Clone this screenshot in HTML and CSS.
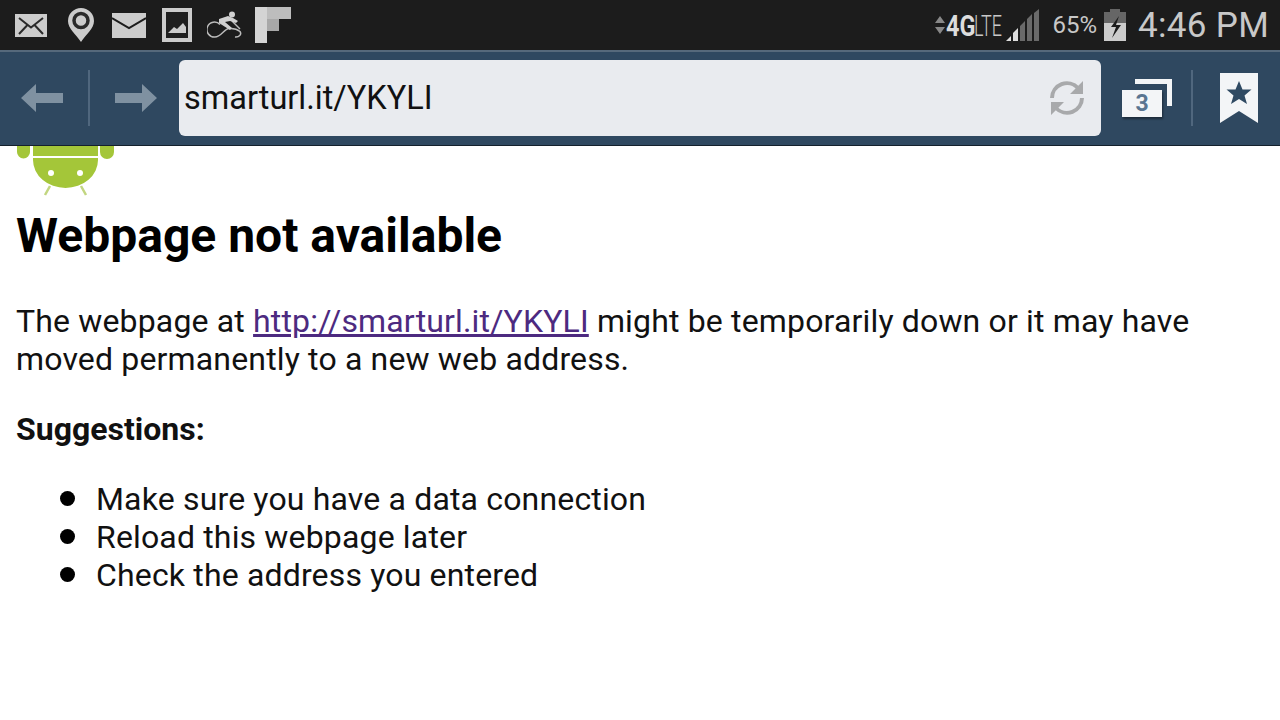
FILE: index.html
```html
<!DOCTYPE html>
<html lang="en">

<head>
    <meta charset="UTF-8" />
    <title>Webpage not available</title>
    <link rel="stylesheet" href="styles.css">
</head>

<body>
    <div class="statusbar">
        <div class="notif">
            <svg class="ic ic-env" viewBox="0 0 32 24"><rect x="0" y="1" width="32" height="23" fill="#ccc"/><path d="M4 5l12 9.500L28 5M4 21l8-8.500M28 21l-8-8.500" fill="none" stroke="#2a2a2a" stroke-width="2"/></svg>
            <svg class="ic ic-pin" viewBox="0 0 26 34"><path d="M13 0a13 13 0 0 1 13 13c0 8-8 13-13 21C8 26 0 21 0 13A13 13 0 0 1 13 0z" fill="#ccc"/><circle cx="13" cy="12.500" r="7" fill="none" stroke="#2a2a2a" stroke-width="3.500"/></svg>
            <svg class="ic ic-mail" viewBox="0 0 34 25"><path d="M0 0h34v25H0z" fill="#ccc"/><path d="M0 5l17 10L34 5" fill="none" stroke="#1c1c1c" stroke-width="2"/></svg>
            <svg class="ic ic-pic" viewBox="0 0 30 34"><path d="M0 0h30v34H0z" fill="#ccc"/><path d="M4 4h22v26H4z" fill="#1f1f1f"/><path d="M6 25l6-6 3 2 6-6 3 4v6z" fill="#ccc"/></svg>
            <svg class="ic ic-bike" viewBox="0 0 36 28"><g fill="none" stroke="#bbb" stroke-width="1.500"><path d="M13 13.500A7.500 7.500 0 1 0 8 26c6 0 9-8 14-8.500 5-.5 8 .5 11 3 2 3-1 6-5 5.500"/><path d="M25 10l8 8"/></g><circle cx="25" cy="3.500" r="3" fill="#d0d0d0"/><path d="M12 8l9-3 5 2 5 3-2 2-6-2-5 1 7 6-2 2-11-7z" fill="#d0d0d0"/></svg>
            <svg class="ic ic-flip" viewBox="0 0 36 36"><path d="M0 0h12v36H0z" fill="#d4d4d4"/><path d="M12 0h24v12H12z" fill="#bdbdbd"/><path d="M12 12h12v12H12z" fill="#a8a8a8"/></svg>
        </div>
        <div class="sysinfo">
            <svg class="ic ic-updown" viewBox="0 0 12 20"><path d="M6 1l5 7H1zM6 19l-5-7h10z" fill="#888"/></svg>
            <span class="net"><b>4G</b><span class="lte">LTE</span></span>
            <svg class="ic ic-signal" viewBox="0 0 34 32"><path d="M0 32l5-5v5z" fill="#ddd"/><path d="M7 32V24l5-5v13z" fill="#ddd"/><path d="M14 32V17l5-5v20zM21 32V10l5-5v27zM28 32V4l5-4v32z" fill="#6a6a6a"/></svg>
            <span class="batt">65%</span>
            <svg class="ic ic-batt" viewBox="0 0 22 32"><path d="M6 0h10v3h6v29H0V3h6z" fill="#666"/><path d="M0 14h22v18H0z" fill="#ccc"/><path d="M15 7L7 18h5L8 29l9-13h-5z" fill="#1c1c1c"/></svg>
            <span class="clock">4:46 PM</span>
        </div>
    </div>

    <div class="toolbar">
        <svg class="arrow" viewBox="0 0 42 28"><path d="M0 14L15 0v9h27v10H15v9z" fill="#7f91a1"/></svg>
        <div class="sep"></div>
        <svg class="arrow" viewBox="0 0 42 28"><path d="M42 14L27 0v9H0v10h27v9z" fill="#7f91a1"/></svg>
        <div class="urlbox">
            <span class="urltext">smarturl.it/YKYLI</span>
            <svg class="reload" viewBox="0 0 36 36"><g fill="none" stroke="#a8a9ab" stroke-width="4"><path d="M3 18A15 15 0 0 1 29 8"/><path d="M33 18A15 15 0 0 1 7 28"/></g><path d="M34 1v13H21zM2 35V22h13z" fill="#a8a9ab"/></svg>
        </div>
        <div class="tabs">
            <div class="tabback"></div>
            <div class="tabfront">3</div>
        </div>
        <div class="sep sep2"></div>
        <svg class="bookmark" viewBox="0 0 38 50"><path d="M0 0h38v50L19 38 0 50z" fill="#f3f5f7"/><path d="M19 8l3.500 8.500h9l-7 6 2.500 8.500-8-5-8 5 2.500-8.500-7-6h9z" fill="#2f4a63"/></svg>
    </div>

    <div class="page">
        <svg class="droid" viewBox="0 0 99 50"><path d="M1 0h13v6a6.500 6.500 0 0 1-13 0zM84 0h14v6a7 7 0 0 1-14 0z" fill="#a4c639"/><path d="M17 0h65v10H17zM17 12h65v2a32.500 28 0 0 1-65 0z" fill="#a4c639"/><circle cx="35" cy="27" r="3" fill="#fff"/><circle cx="64" cy="27" r="3" fill="#fff"/><path d="M34 40l-5 9M65 40l5 9" stroke="#c2d680" stroke-width="2.500"/></svg>
        <h1>Webpage not available</h1>
        <p>The webpage at <a href="#">http://smarturl.it/YKYLI</a> might be temporarily down or it may have moved permanently to a new web address.</p>
        <p class="sugg">Suggestions:</p>
        <ul>
            <li>Make sure you have a data connection</li>
            <li>Reload this webpage later</li>
            <li>Check the address you entered</li>
        </ul>
    </div>
</body>

</html>
```

FILE: styles.css
```css
html, body {
    margin: 0;
    padding: 0;
    background: #fff;
    font-family: Roboto, "Liberation Sans", sans-serif;
}

body {
    width: 1280px;
    height: 720px;
    overflow: hidden;
}

/* Status bar */
.statusbar {
    height: 50px;
    background: #1c1c1c;
    display: flex;
    justify-content: space-between;
    align-items: center;
    padding: 0 11px 0 15px;
    box-sizing: border-box;
}

.notif, .sysinfo {
    display: flex;
    align-items: center;
}

.ic {
    display: block;
    flex: none;
}

.ic-env { width: 32px; height: 24px; }
.ic-pin { width: 26px; height: 34px; margin-left: 21px; }
.ic-mail { width: 34px; height: 25px; margin-left: 18px; }
.ic-pic { width: 30px; height: 34px; margin-left: 16px; }
.ic-bike { width: 36px; height: 28px; margin-left: 15px; }
.ic-flip { width: 36px; height: 36px; margin-left: 12px; }

.sysinfo {
    color: #c8c8c8;
}

.ic-updown { width: 12px; height: 20px; }
.ic-signal { width: 34px; height: 32px; margin: 0 13px 0 5px; }
.ic-batt { width: 22px; height: 32px; }

.net {
    display: flex;
    width: 55px;
    font-size: 30px;
    white-space: nowrap;
}

.net b {
    display: block;
    width: 28px;
    color: #ddd;
    transform: scaleX(0.78);
    transform-origin: left center;
}

.lte {
    display: block;
    width: 27px;
    font-weight: 300;
    transform: scaleX(0.6);
    transform-origin: left center;
}

.batt {
    font-size: 24px;
    margin-right: 7px;
}

.clock {
    font-size: 35px;
    margin-left: 12px;
    letter-spacing: 0.3px;
}

/* Toolbar */
.toolbar {
    height: 96px;
    box-sizing: border-box;
    background: #2f4860;
    border-top: 2px solid #56697b;
    border-bottom: 1px solid #14202c;
    display: flex;
    align-items: center;
    padding: 0 21px 2px;
}

.arrow {
    width: 42px;
    height: 28px;
    flex: none;
}

.sep {
    width: 2px;
    height: 56px;
    background: #50677e;
    margin: 0 25px;
    flex: none;
}

.urlbox {
    width: 922px;
    height: 76px;
    margin-left: 22px;
    background: #e9ebef;
    border-radius: 6px;
    display: flex;
    align-items: center;
    justify-content: space-between;
    padding: 0 16px 0 5px;
    box-sizing: border-box;
    flex: none;
}

.urltext {
    font-size: 32.500px;
    color: #111;
}

.reload {
    width: 36px;
    height: 36px;
}

.tabs {
    position: relative;
    width: 50px;
    height: 38px;
    margin-left: 21px;
    flex: none;
}

.tabback {
    position: absolute;
    top: 0;
    right: 0;
    width: 32px;
    height: 22px;
    border-top: 5px solid #f3f5f7;
    border-right: 5px solid #f3f5f7;
}

.tabfront {
    position: absolute;
    left: 0;
    bottom: 0;
    width: 40px;
    height: 27px;
    background: #f3f5f7;
    color: #5a7591;
    font-size: 23px;
    font-weight: 700;
    text-align: center;
    line-height: 27px;
    box-shadow: 1px 2px 2px rgba(0, 0, 0, 0.4);
}

.sep2 {
    margin: 0 27px 0 19px;
}

.bookmark {
    width: 38px;
    height: 50px;
    flex: none;
}

/* Page */
.page {
    padding: 0 16px;
    color: #111;
}

.droid {
    display: block;
    width: 99px;
    height: 50px;
}

h1 {
    margin: 11px 0 0;
    font-size: 48px;
    line-height: 58px;
    color: #000;
}

p {
    margin: 37px 0 0;
    font-size: 32px;
    line-height: 38px;
    letter-spacing: 0.16px;
}

a {
    color: #4d2a80;
}

.sugg {
    margin-top: 32px;
    font-weight: 700;
    letter-spacing: 0;
}

ul {
    margin: 32px 0 0;
    padding: 0 0 0 80px;
    font-size: 32px;
    line-height: 38px;
    letter-spacing: 0.16px;
    list-style: none;
}

li {
    position: relative;
}

li::before {
    content: "";
    position: absolute;
    left: -36px;
    top: 11px;
    width: 15px;
    height: 15px;
    border-radius: 50%;
    background: #000;
}
```
